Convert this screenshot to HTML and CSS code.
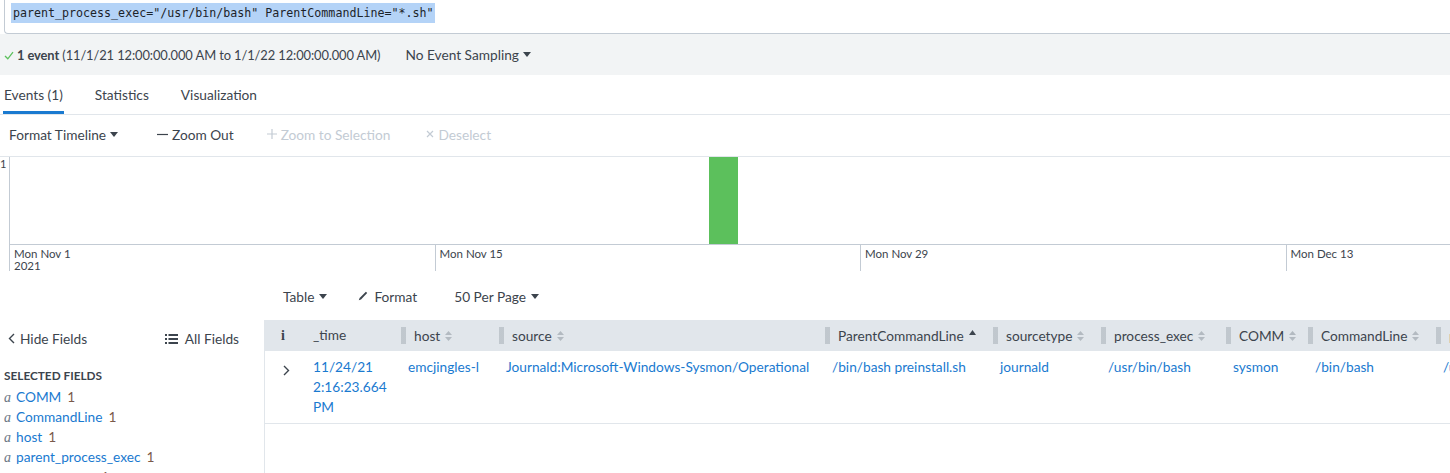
FILE: index.html
```html
<!DOCTYPE html>
<html>
<head>
<meta charset="utf-8">
<link rel="stylesheet" href="styles.css">
</head>
<body>
<div class="search">
  <div class="search-box"><span class="query">parent_process_exec="/usr/bin/bash" ParentCommandLine="*.sh"</span></div>
</div>

<div class="status">
  <svg class="check" width="10" height="9" viewBox="0 0 10 9"><path d="M1 5 L3.8 7.8 L9 1.2" stroke="#5cc05c" stroke-width="1.3" fill="none"/></svg>
  <span class="count"><b>1 event</b> (11/1/21 12:00:00.000 AM to 1/1/22 12:00:00.000 AM)</span>
  <span class="sampling">No Event Sampling <svg class="caret" width="8" height="5" viewBox="0 0 8 5"><path d="M0 0H8L4 5Z" fill="currentColor"/></svg></span>
</div>

<div class="tabs">
  <div class="tab active">Events (1)</div>
  <div class="tab">Statistics</div>
  <div class="tab">Visualization</div>
</div>

<div class="tl-toolbar">
  <span class="tl-btn">Format Timeline <svg class="caret" width="8" height="5" viewBox="0 0 8 5"><path d="M0 0H8L4 5Z" fill="currentColor"/></svg></span>
  <span class="tl-btn zoomout"><svg width="11" height="11" viewBox="0 0 11 11"><path d="M0 5.5H11" stroke="currentColor" stroke-width="1.2"/></svg>Zoom Out</span>
  <span class="tl-btn disabled zoomsel"><svg width="10" height="10" viewBox="0 0 10 10"><path d="M0 5H10M5 0V10" stroke="currentColor" stroke-width="1.2"/></svg>Zoom to Selection</span>
  <span class="tl-btn disabled deselect"><svg width="8" height="8" viewBox="0 0 8 8"><path d="M1 1L7 7M7 1L1 7" stroke="currentColor" stroke-width="1.2"/></svg>Deselect</span>
</div>

<div class="timeline">
  <div class="chart">
    <div class="yaxis">1</div>
    <div class="plot">
      <div class="bar" style="left:699px;width:29px"></div>
    </div>
  </div>
  <div class="xaxis">
    <div class="tick">Mon Nov 1<br>2021</div>
    <div class="tick">Mon Nov 15</div>
    <div class="tick">Mon Nov 29</div>
    <div class="tick">Mon Dec 13</div>
  </div>
</div>

<div class="res-toolbar">
  <span class="res-btn table-btn">Table <svg class="caret" width="8" height="5" viewBox="0 0 8 5"><path d="M0 0H8L4 5Z" fill="currentColor"/></svg></span>
  <span class="res-btn format-btn"><svg width="10" height="10" viewBox="0 0 10 10"><path d="M0.8 9.2 L1.6 6.9 L7.9 0.8 L9.2 2.1 L3 8.4Z" fill="currentColor"/></svg>Format</span>
  <span class="res-btn perpage-btn">50 Per Page <svg class="caret" width="8" height="5" viewBox="0 0 8 5"><path d="M0 0H8L4 5Z" fill="currentColor"/></svg></span>
</div>

<div class="main">
  <aside class="sidebar">
    <div class="side-head">
      <span class="hide"><svg width="7" height="11" viewBox="0 0 7 11"><path d="M6 1 L1.5 5.5 L6 10" stroke="currentColor" stroke-width="1.4" fill="none"/></svg>Hide Fields</span>
      <span class="all"><svg width="13" height="10" viewBox="0 0 13 10"><rect x="0" y="0" width="2" height="2" fill="currentColor"/><rect x="0" y="4" width="2" height="2" fill="currentColor"/><rect x="0" y="8" width="2" height="2" fill="currentColor"/><rect x="3.5" y="0" width="9.5" height="2" fill="currentColor"/><rect x="3.5" y="4" width="9.5" height="2" fill="currentColor"/><rect x="3.5" y="8" width="9.5" height="2" fill="currentColor"/></svg>All Fields</span>
    </div>
    <div class="sel-title">SELECTED FIELDS</div>
    <ul class="fields">
      <li><i>a</i><span class="fname">COMM</span><span class="fcount">1</span></li>
      <li><i>a</i><span class="fname">CommandLine</span><span class="fcount">1</span></li>
      <li><i>a</i><span class="fname">host</span><span class="fcount">1</span></li>
      <li><i>a</i><span class="fname">parent_process_exec</span><span class="fcount">1</span></li>
      <li><i>a</i><span class="fname">process_exec</span><span class="fcount">1</span></li>
    </ul>
  </aside>
  <section class="results">
    <div class="grid head">
      <div class="hc info">i</div>
      <div class="hc time">_time</div>
      <div class="hc"><span class="grip"></span>host<svg class="sort" width="7" height="10" viewBox="0 0 7 10"><path d="M3.5 0L7 4H0Z M3.5 10L0 6H7Z" fill="#b3bac1"/></svg></div>
      <div class="hc"><span class="grip"></span>source<svg class="sort" width="7" height="10" viewBox="0 0 7 10"><path d="M3.5 0L7 4H0Z M3.5 10L0 6H7Z" fill="#b3bac1"/></svg></div>
      <div class="hc"><span class="grip"></span>ParentCommandLine<svg class="sort up" width="7" height="5" viewBox="0 0 7 5"><path d="M3.5 0L7 5H0Z" fill="#3c444d"/></svg></div>
      <div class="hc"><span class="grip"></span>sourcetype<svg class="sort" width="7" height="10" viewBox="0 0 7 10"><path d="M3.5 0L7 4H0Z M3.5 10L0 6H7Z" fill="#b3bac1"/></svg></div>
      <div class="hc"><span class="grip"></span>process_exec<svg class="sort" width="7" height="10" viewBox="0 0 7 10"><path d="M3.5 0L7 4H0Z M3.5 10L0 6H7Z" fill="#b3bac1"/></svg></div>
      <div class="hc"><span class="grip"></span>COMM<svg class="sort" width="7" height="10" viewBox="0 0 7 10"><path d="M3.5 0L7 4H0Z M3.5 10L0 6H7Z" fill="#b3bac1"/></svg></div>
      <div class="hc"><span class="grip"></span>CommandLine<svg class="sort" width="7" height="10" viewBox="0 0 7 10"><path d="M3.5 0L7 4H0Z M3.5 10L0 6H7Z" fill="#b3bac1"/></svg></div>
      <div class="hc"><span class="grip"></span>parent_process_exec</div>
    </div>
    <div class="grid row">
      <div class="c expand"><svg width="7" height="11" viewBox="0 0 7 11"><path d="M1 1 L5.5 5.5 L1 10" stroke="#3c444d" stroke-width="1.4" fill="none"/></svg></div>
      <div class="c v">11/24/21<br>2:16:23.664<br>PM</div>
      <div class="c v">emcjingles-l</div>
      <div class="c v">Journald:Microsoft-Windows-Sysmon/Operational</div>
      <div class="c v">/bin/bash preinstall.sh</div>
      <div class="c v">journald</div>
      <div class="c v">/usr/bin/bash</div>
      <div class="c v">sysmon</div>
      <div class="c v">/bin/bash</div>
      <div class="c v">/usr/bin/bash</div>
    </div>
  </section>
</div>
</body>
</html>
```

FILE: styles.css
```css
* { box-sizing: border-box; }
html, body { margin: 0; padding: 0; }
body {
  width: 1450px;
  height: 473px;
  overflow: hidden;
  background: #fff;
  font-family: "Lato", "Liberation Sans", sans-serif;
  font-size: 13.7px;
  color: #3c444d;
}
svg { display: inline-block; }

/* search */
.search { background: #fff; padding-left: 4px; height: 34px; }
.search-box {
  height: 34px;
  border: 1px solid #c3cbd4;
  border-top: none;
  border-right: none;
  border-radius: 0 0 0 4px;
  padding: 3px 0 0 6px;
}
.query {
  display: inline-block;
  background: #b4d3f7;
  font-family: "DejaVu Sans Mono", "Liberation Mono", monospace;
  font-size: 11.65px;
  line-height: 20px;
  padding: 0 1px 0 2px;
  color: #1c2329;
}

/* status */
.status {
  background: #f2f4f5;
  height: 41px;
  display: flex;
  align-items: center;
  padding: 0 0 0 4px;
}
.check { margin-right: 3px; margin-top: 1px; }
.count { font-size: 12.9px; letter-spacing: -0.1px; }
.count b { font-weight: 700; }
.sampling { margin-left: 25px; display: inline-flex; align-items: center; gap: 4px; }
.caret { color: #3c444d; }

/* tabs */
.tabs {
  height: 40px;
  display: flex;
  border-bottom: 1px solid #e1e6eb;
  padding-left: 3px;
}
.tab {
  padding: 2px 1px 0;
  margin-right: 30px;
  display: flex;
  align-items: center;
  border-bottom: 3px solid transparent;
  height: 39px;
}
.tab.active { border-bottom-color: #1a7ad0; }

/* timeline toolbar */
.tl-toolbar {
  height: 42px;
  display: flex;
  align-items: center;
  padding: 0 0 3px 9px;
  border-bottom: 1px solid #e1e6eb;
}
.tl-btn { display: inline-flex; align-items: center; gap: 4px; }
.zoomout { margin-left: 39px; }
.zoomsel { margin-left: 33px; }
.deselect { margin-left: 36px; }
.disabled { color: #c3cbd4; }

/* timeline */
.chart { display: flex; height: 88px; }
.yaxis { width: 9px; font-size: 11px; padding-top: 1px; line-height: 12px; }
.plot {
  flex: 1;
  position: relative;
  border-left: 1px solid #c3cbd4;
  border-bottom: 1px solid #c3cbd4;
}
.bar { position: absolute; top: 0; bottom: 0; background: #5cc05c; }
.xaxis { display: flex; padding-left: 9px; height: 26px; }
.tick {
  width: 425.5px;
  flex: none;
  border-left: 1px solid #c3cbd4;
  padding: 3px 0 0 4px;
  font-size: 11.5px;
  line-height: 12px;
}

/* results toolbar */
.res-toolbar {
  height: 49px;
  display: flex;
  align-items: center;
  padding: 1px 0 0 283px;
}
.res-btn { display: inline-flex; align-items: center; gap: 5px; }
.format-btn { margin-left: 31px; gap: 6px; }
.perpage-btn { margin-left: 37px; gap: 5px; }

/* main */
.main { display: flex; }
.sidebar { width: 264px; flex: none; padding: 0 8px; }
.side-head {
  height: 37px;
  display: flex;
  align-items: center;
  justify-content: space-between;
  padding-right: 17px;
}
.hide, .all { display: inline-flex; align-items: center; gap: 5px; }
.all { gap: 7px; }
.sel-title {
  font-size: 11.8px;
  font-weight: 700;
  margin-top: 11px;
  line-height: 16px;
  margin-left: -4px;
}
.fields { list-style: none; margin: 3px 0 0 -4px; padding: 0; }
.fields li { line-height: 20px; height: 20px; white-space: nowrap; }
.fields i {
  font-family: "Liberation Serif", serif;
  font-style: italic;
  font-size: 14px;
  color: #6b7785;
  margin-right: 5px;
}
.fname { color: #1a7ad0; }
.fcount { color: #7a5a4a; margin-left: 6px; }

.results { flex: 1; border-left: 1px solid #e1e6eb; min-width: 0; }
.grid {
  display: grid;
  grid-template-columns: 39px 95px 98px 326px 168px 108px 125px 82px 128px 300px;
}
.head { background: #e1e6eb; height: 31px; }
.hc {
  display: flex;
  align-items: center;
  white-space: nowrap;
  padding-left: 2px;
}
.hc.info {
  padding-left: 16px;
  font-family: "Liberation Serif", serif;
  font-weight: 700;
  font-size: 14px;
}
.hc.time { padding-left: 9px; margin-top: -2px; }
.grip {
  width: 5px;
  height: 17px;
  margin-right: 8px;
  background-image: radial-gradient(circle, #9aa3ac 0.6px, transparent 0.8px);
  background-size: 2px 2px;
}
.sort { margin-left: 5px; }
.sort.up { align-self: flex-start; margin-top: 10px; }

.row { border-bottom: 1px solid #e1e6eb; }
.c { padding: 6px 0 6px 9px; line-height: 20px; white-space: nowrap; }
.c.v { color: #1a7ad0; }
.c.expand { padding-left: 18px; padding-top: 10px; }
```
